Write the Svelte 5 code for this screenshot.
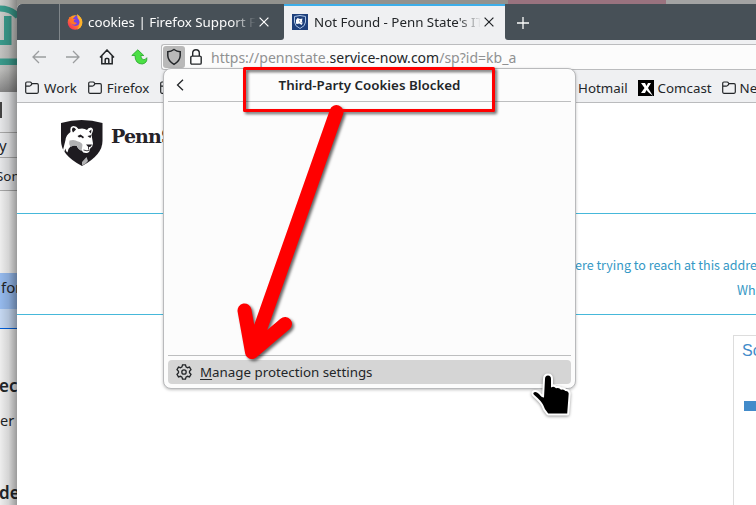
<script lang="ts">
	let tabs = [
		{ title: 'cookies | Firefox Support Forum', icon: 'firefox', active: false },
		{ title: "Not Found - Penn State's IT Service", icon: 'penn', active: true }
	];
	let notices = ['ere trying to reach at this address', 'What'];
</script>

{#snippet folder()}
	<svg class="folder" width="14" height="14" viewBox="0 0 14 14">
		<path d="M.7 2.2Q.7 1 1.9 1h3.2q.8 0 1.2.7l.6 1h5.2q1.2 0 1.2 1.2v7.2q0 1.2-1.2 1.2H1.9Q.7 12.3.7 11.1zM.7 5.1h3.7q1 0 1.5-.8l1-1.5" />
	</svg>
{/snippet}

{#snippet bear()}
	<path fill="#1e1b20" d="M0 3Q20.500-3 41.500 3v18q0 14-20.500 25Q0 35 0 21z" />
	<path fill="#fff" d="M2 30l2.500-10q.5-5 5-8-1-6 3-6 3 0 5 3 5-1.500 8.500 1 1-2.500 4-2.500 3 1 1.500 4.500l-1 2.500 1.500 9-1 3.500q-2.500 1-2 3.500-1 3-4 2.500-3.500 0-4-2.500-4-1-5.500-5-4-1-6 1-2.500 2-3 6-2-1-2-4l-1.500 4z" />
	<path fill="#b1b1b3" d="M8.500 20.500q5-1.500 8.500 1 4 1 4.500 3.500l-1 6q-3-1-4.500-5-4-1-6 1-2.500-2-1.500-6.500zM21 45.500v-3.500l4.500-5 1.500 4q-2 3-6 4.500z" />
	<path fill="#1e1b20" d="M12 7.500q-2 2 0 5l3-3q-1-2-3-2M30.500 9.500l-2.500 2 2 2zM16.500 16l3-1.500 3.500 2.500-1 1.500-2-1.500-2 .5zM26.500 16l4-1-1 3-1.500-.7zM25 24.500h6l-1 2-2.500.7z" />
	<path fill="none" stroke="#1e1b20" stroke-width=".8" d="M22.500 30l3.500.8 3-.8M27.500 27v2.500M21 33.500q4 3 8-2" />
{/snippet}

<div class="desktop">
	<div class="behind">
		<div class="wallpaper">
			<svg width="17" height="92" viewBox="0 0 17 92">
				<path fill="none" stroke="#3b9d8e" stroke-width="6" d="M0 8.500q11 0 18 8" />
				<path fill="#3b9d8e" d="M4 16h7.500v29H0v-5h4zM0 58.500h17V65H0z" />
			</svg>
		</div>
		<div class="strip title"><i></i></div>
		<div class="strip address">y</div>
		<div class="strip links">Son</div>
		<div class="blank"></div>
		<div class="row picked">for</div>
		<div class="row pale"></div>
		<div class="row head">ec</div>
		<div class="row body">er</div>
		<div class="row foot">de</div>
		<div class="shade"></div>
	</div>
	<div class="top-edge"><i></i></div>

	<div class="window">
		<div class="tabbar">
			<div class="gap"></div>
			{#each tabs as tab}
				<div class="tab" class:active={tab.active}>
					{#if tab.icon === 'firefox'}
						<svg class="favicon" width="16" height="16" viewBox="0 0 16 16">
							<defs>
								<linearGradient id="fox" x1="1" y1="0" x2="0" y2="1">
									<stop offset="0" stop-color="#ffe226" />
									<stop offset=".45" stop-color="#ff8a22" />
									<stop offset="1" stop-color="#f5156c" />
								</linearGradient>
							</defs>
							<circle cx="8" cy="8.500" r="7.300" fill="url(#fox)" />
							<path fill="#7543e3" d="M6.500 4Q9 .5 12 2q2 3 1 6-1 4-5 4-4-1-3.500-5z" />
							<path fill="#ffb329" d="M10 0q6 4 5.200 10-1 4-5 5.500Q14 10 12 6q-2-2-2-6" />
							<path fill="#ff7528" d="M2 3l3 2h4q-3 1-2 3l3 1q-2 3-5 1-3-2-3-7" />
						</svg>
					{:else}
						<svg class="favicon" width="16" height="16" viewBox="0 0 16 16">
							<path fill="#1e407c" d="M0 0h16v16H0z" />
							<path fill="#1e407c" stroke="#a9c3e6" d="M2.500 2.500q5.500-2 11 0V8q0 4-5.500 6.500Q2.500 12 2.500 8z" />
							<path fill="#fff" d="M4 9.500V6l1.500-2L8 5l2.500-.5-.5 2 .5 3-1 1.500-2-1.500L5 10z" />
							<path fill="#1e407c" d="M7 6.300l1.500.7-1.500.6zM8.500 8.500h1.500l-.8.8z" />
						</svg>
					{/if}
					<span class="label">{tab.title}</span>
					<svg class="close" width="10" height="10" viewBox="0 0 10 10"><path d="M.6.6l8.800 8.800M9.400.6L.6 9.400" /></svg>
				</div>
			{/each}
			<div class="newtab">
				<svg width="12" height="12" viewBox="0 0 12 12"><path d="M6 0v12M0 6h12" /></svg>
			</div>
		</div>

		<div class="toolbar">
			<div class="buttons">
				<svg class="dim" width="16" height="16" viewBox="0 0 16 16"><path d="M15 8H2M8 2L2 8l6 6" /></svg>
				<svg class="dim" width="16" height="16" viewBox="0 0 16 16"><path d="M1 8h13M8 2l6 6-6 6" /></svg>
				<svg width="16" height="16" viewBox="0 0 16 16"><path stroke-width="1.500" d="M1 8.500L8 1l7 7.500M2.800 7v7.700h10.400V7M6.200 14.500v-4q0-1 1-1h1.600q1 0 1 1v4" /></svg>
				<svg class="reload" width="18" height="16" viewBox="0 0 18 16">
					<path fill="#4be045" stroke="#24a32a" stroke-width=".8" d="M.8 6.500L6.800.8l6 5.700h-3q0 4 3 4.200 2.200-.2 3-2 .8 5.300-4.500 6.300Q4 15 4 6.500z" />
				</svg>
			</div>
			<div class="urlbar">
				<div class="shield">
					<svg width="16" height="18" viewBox="0 0 16 18"><path stroke-width="1.500" d="M8 1.500q3 2 6.200 2.300v4Q14 13 8 16.300 2 13 1.800 7.800v-4Q5 3.500 8 1.500z" /></svg>
				</div>
				<svg class="lock" width="12" height="16" viewBox="0 0 12 16"><path stroke-width="1.400" d="M2.700 7V4Q2.700.8 6 .8T9.300 4v3M2 7.100h8q1.200 0 1.200 1.200v5.600q0 1.200-1.200 1.200H2Q.8 15.100.8 13.900V8.300Q.8 7.100 2 7.100z" /></svg>
				<span class="url">https://pennstate.<b>service-now.com</b>/sp?id=kb_a</span>
			</div>
		</div>

		<div class="bookmarks">
			<div class="marks">
				<span>{@render folder()}Work</span>
				<span>{@render folder()}Firefox</span>
				<span>{@render folder()}News</span>
			</div>
			<div class="marks right">
				<span>Hotmail</span>
				<span>
					<svg width="16" height="16" viewBox="0 0 16 16">
						<path d="M0 0h16v16H0z" />
						<path fill="#fff" d="M3 3h4l1.500 3L10 3h3l-3 5 5 8-5-4-1.500-2L7 13H3l3.500-5z" />
					</svg>Comcast
				</span>
				<span>{@render folder()}News</span>
			</div>
		</div>

		<div class="page">
			<div class="brand">
				<svg width="43" height="47" viewBox="0 0 43 47">{@render bear()}</svg>
				<span>PennState</span>
			</div>
			<div class="notice">
				{#each notices as line}
					<p>{line}</p>
				{/each}
			</div>
			<div class="card">
				<h4>Sc</h4>
				<div class="bar"></div>
			</div>
		</div>
	</div>

	<div class="popup">
		<div class="popup-head">
			<svg width="8" height="12" viewBox="0 0 8 12"><path d="M7 .7L1.500 6 7 11.300" /></svg>
			<span>Third-Party Cookies Blocked</span>
		</div>
		<div class="popup-body"></div>
		<div class="manage">
			<svg width="16" height="16" viewBox="0 0 16 16">
				<path d="M6.500.8h3l.5 2 1.500.9 2-.6L15 5.700l-1.500 1.500v1.600l1.500 1.500-1.500 2.600-2-.6-1.500.9-.5 2h-3l-.5-2-1.500-.9-2 .6L1 10.300l1.500-1.500V7.200L1 5.700l1.500-2.600 2 .6L6 2.800z" />
				<circle cx="8" cy="8" r="2.200" />
			</svg>
			<span><u>M</u>anage protection settings</span>
		</div>
	</div>

	<svg class="marks-layer" width="756" height="505" viewBox="0 0 756 505">
		<g class="red">
			<path stroke-width="3" stroke-linejoin="round" d="M244.500 68.500h249v42h-249z" />
			<path stroke-width="14" stroke-linecap="round" stroke-linejoin="round" d="M336.500 112L252 352M244.500 310.500L252 352l33-28" />
		</g>
		<path class="hand" d="M545 379q0-3.500 3-3.500t3 3.500v8.500q3-2 5 .8 3-1.300 5 1.400 3-1 4.300 1.300 3.200-.5 3.400 2.500l-1.500 20h-19q-3.700-4-5-8.500-1.700-3.800-9.200-10.300-1.500-1.700.3-2.500 2-.7 4.700 1.800 2.800 3.700 5 3.500z" />
	</svg>
</div>

<style>
	:global(body) {
		margin: 0;
		overflow: hidden;
	}
	.desktop {
		position: relative;
		width: 756px;
		height: 505px;
		overflow: hidden;
		background: #999;
		font-family: 'Noto Sans', sans-serif;
		font-size: 13.33px;
		color: #232629;
	}
	svg {
		flex: none;
		display: block;
	}

	/* window at the back */
	.behind {
		position: absolute;
		inset: 0 auto 0 0;
		width: 17px;
		overflow: hidden;
		background: #f2f2f2;
	}
	.wallpaper {
		height: 92px;
		background: linear-gradient(#d3d3d0, #c2c2c0 75%, #888);
	}
	.strip {
		box-sizing: border-box;
		background: #e9eaec;
		border-bottom: 1px solid #aaa;
		white-space: nowrap;
	}
	.title {
		height: 41px;
		padding-top: 10px;
	}
	.title i {
		display: block;
		width: 2px;
		height: 16px;
		background: #444;
	}
	.address {
		height: 25px;
		font-size: 15px;
		line-height: 24px;
		text-indent: -1px;
	}
	.links {
		height: 33px;
		line-height: 36px;
		text-indent: -4px;
	}
	.blank {
		height: 82px;
	}
	.row {
		white-space: nowrap;
		font-size: 15px;
	}
	.picked {
		height: 36px;
		background: #98bdf1;
		line-height: 28px;
		text-indent: 1px;
	}
	.pale {
		height: 19px;
		background: #c8dbf5;
		border-bottom: 1px solid #0060df;
	}
	.head,
	.foot {
		font-size: 17px;
		font-weight: 600;
		text-indent: -1px;
	}
	.head {
		height: 36px;
		padding-top: 44px;
		line-height: 26px;
	}
	.body {
		height: 72px;
		line-height: 23px;
		font-size: 14.5px;
	}
	.foot {
		line-height: 24px;
	}
	.shade {
		position: absolute;
		inset: 0;
		background: linear-gradient(90deg, rgba(0, 0, 0, 0.02), rgba(0, 0, 0, 0.12) 50%, rgba(0, 0, 0, 0.36));
	}
	.top-edge {
		position: absolute;
		inset: 0 0 auto 17px;
		height: 12px;
		display: flex;
		justify-content: flex-end;
		background: #92928e;
	}
	.top-edge i {
		width: 158px;
		margin-right: 90px;
		background: #9a737f;
		box-shadow: 90px 0 #a3a3a3;
	}

	/* browser window */
	.window {
		position: absolute;
		inset: 4px 0 0 17px;
		display: flex;
		flex-direction: column;
		background: #fff;
		border-top-left-radius: 5px;
		overflow: hidden;
	}
	.tabbar {
		display: flex;
		height: 36px;
		flex: none;
		background: #eff0f2;
	}
	.gap {
		width: 42px;
		background: #475057;
		border-right: 1px solid #80868a;
	}
	.tab {
		box-sizing: border-box;
		display: flex;
		align-items: center;
		width: 224px;
		padding: 0 15px 0 7px;
		background: #475057;
		color: #fcfcfc;
		border-bottom-right-radius: 3px;
	}
	.tab.active {
		width: 221px;
		padding: 0 11px 2px 8px;
		background: #eff0f2;
		color: #232629;
		border-top: 2px solid #3daee9;
	}
	.favicon {
		margin-right: 6px;
	}
	.tab:not(.active) .favicon {
		margin-right: 5px;
	}
	.label {
		flex: 1;
		min-width: 0;
		margin-right: 3px;
		overflow: hidden;
		white-space: nowrap;
		mask-image: linear-gradient(90deg, #000 calc(100% - 24px), transparent);
	}
	.close {
		fill: none;
		stroke: currentColor;
		stroke-width: 1.2;
	}
	.newtab {
		flex: 1;
		display: flex;
		align-items: center;
		padding: 1px 0 0 12px;
		background: #475057;
		border-bottom-left-radius: 3px;
	}
	.newtab svg {
		stroke: #fcfcfc;
		stroke-width: 1.3;
	}
	.toolbar {
		display: flex;
		flex: none;
		height: 26px;
		padding-top: 4px;
		background: #eff0f2;
	}
	.buttons {
		box-sizing: border-box;
		width: 144px;
		display: flex;
		align-items: center;
		gap: 18px;
		padding-left: 14px;
	}
	.buttons svg,
	.urlbar svg,
	.folder {
		fill: none;
		stroke: #232629;
		stroke-width: 1.2;
	}
	.buttons .dim {
		stroke: #9b9d9f;
		stroke-width: 1.3;
	}
	.reload {
		margin-left: -2px;
	}
	.urlbar {
		box-sizing: border-box;
		flex: 1;
		display: flex;
		align-items: center;
		background: #fcfcfc;
		border: 1px solid #bbbcbe;
		border-right: 0;
		border-radius: 3px 0 0 3px;
	}
	.shield {
		display: flex;
		align-items: center;
		justify-content: center;
		width: 22px;
		height: 22px;
		margin-left: 1px;
		border-radius: 3px;
		background: #b9b9b9;
	}
	.lock {
		margin: 0 9px 0 5px;
	}
	.url {
		font-size: 14.03px;
		color: #909192;
		white-space: nowrap;
	}
	.url b {
		font-weight: 400;
		color: #232629;
	}
	.bookmarks {
		box-sizing: border-box;
		display: flex;
		justify-content: space-between;
		flex: none;
		height: 33px;
		background: #eff0f2;
		border-bottom: 1px solid #babbbd;
		overflow: hidden;
	}
	.marks {
		display: flex;
		align-items: center;
		gap: 11px;
		padding: 4px 0 0 8px;
		white-space: nowrap;
	}
	.marks span {
		display: flex;
		align-items: center;
		gap: 5px;
	}
	.right {
		width: 178px;
		gap: 10px;
		padding-left: 0;
	}
	.right span {
		gap: 4px;
	}

	.page {
		flex: 1;
		display: flex;
		flex-direction: column;
	}
	.brand {
		display: flex;
		gap: 7px;
		padding: 17px 0 0 44px;
		font: bold 19px/32px 'DejaVu Serif', serif;
		color: #252228;
	}
	.brand span {
		letter-spacing: -0.9px;
	}
	.notice {
		box-sizing: border-box;
		height: 102px;
		margin-top: 46px;
		padding-top: 38px;
		border: solid #46b8da;
		border-width: 1px 0;
		color: #3498c5;
		font: 12.53px/25px 'Noto Sans CJK SC', sans-serif;
	}
	.notice p {
		margin: 0 0 0 558px;
		white-space: nowrap;
	}
	.notice p + p {
		margin-left: 720px;
	}
	.card {
		flex: 1;
		margin: 20px 0 0 716px;
		border: solid #ddd;
		border-width: 1px 0 0 1px;
		padding-left: 8px;
	}
	.card h4 {
		margin: 5px 0 40px;
		font: 16px/20px 'Liberation Sans', sans-serif;
		color: #428bca;
	}
	.bar {
		height: 10px;
		margin-left: 2px;
		background: #428bca;
	}

	/* protections panel */
	.popup {
		position: absolute;
		left: 163px;
		top: 68px;
		box-sizing: border-box;
		width: 413px;
		height: 321px;
		padding: 0 4px 4px;
		display: flex;
		flex-direction: column;
		background: #fcfcfc;
		border: 1px solid #b9babc;
		border-radius: 8px;
		box-shadow: 0 1px 3px rgba(0, 0, 0, 0.25);
	}
	.popup-head {
		display: flex;
		align-items: center;
		height: 32px;
		padding-left: 8px;
		border-bottom: 1px solid #bdbebf;
		font-weight: 600;
	}
	.popup-head span {
		flex: 1;
		margin-right: 16px;
		text-align: center;
	}
	.popup-head svg,
	.manage svg {
		fill: none;
		stroke: #232629;
		stroke-width: 1.3;
	}
	.popup-body {
		flex: 1;
		margin-bottom: 4px;
		border-bottom: 1px solid #bdbebf;
	}
	.manage {
		display: flex;
		align-items: center;
		gap: 8px;
		height: 24px;
		padding-left: 8px;
		border-radius: 4px;
		background: #d5d5d5;
	}
	u {
		text-underline-offset: 2px;
	}

	.marks-layer {
		position: absolute;
		left: 0;
		top: 0;
	}
	.red {
		fill: none;
		stroke: #f00;
		filter: drop-shadow(2px 2px 1.5px rgba(0, 0, 0, 0.6));
	}
	.hand {
		fill: #000;
		stroke: #fff;
		stroke-width: 4;
		stroke-linejoin: round;
		paint-order: stroke;
		filter: drop-shadow(0 1px 1.5px rgba(0, 0, 0, 0.4));
	}
</style>
